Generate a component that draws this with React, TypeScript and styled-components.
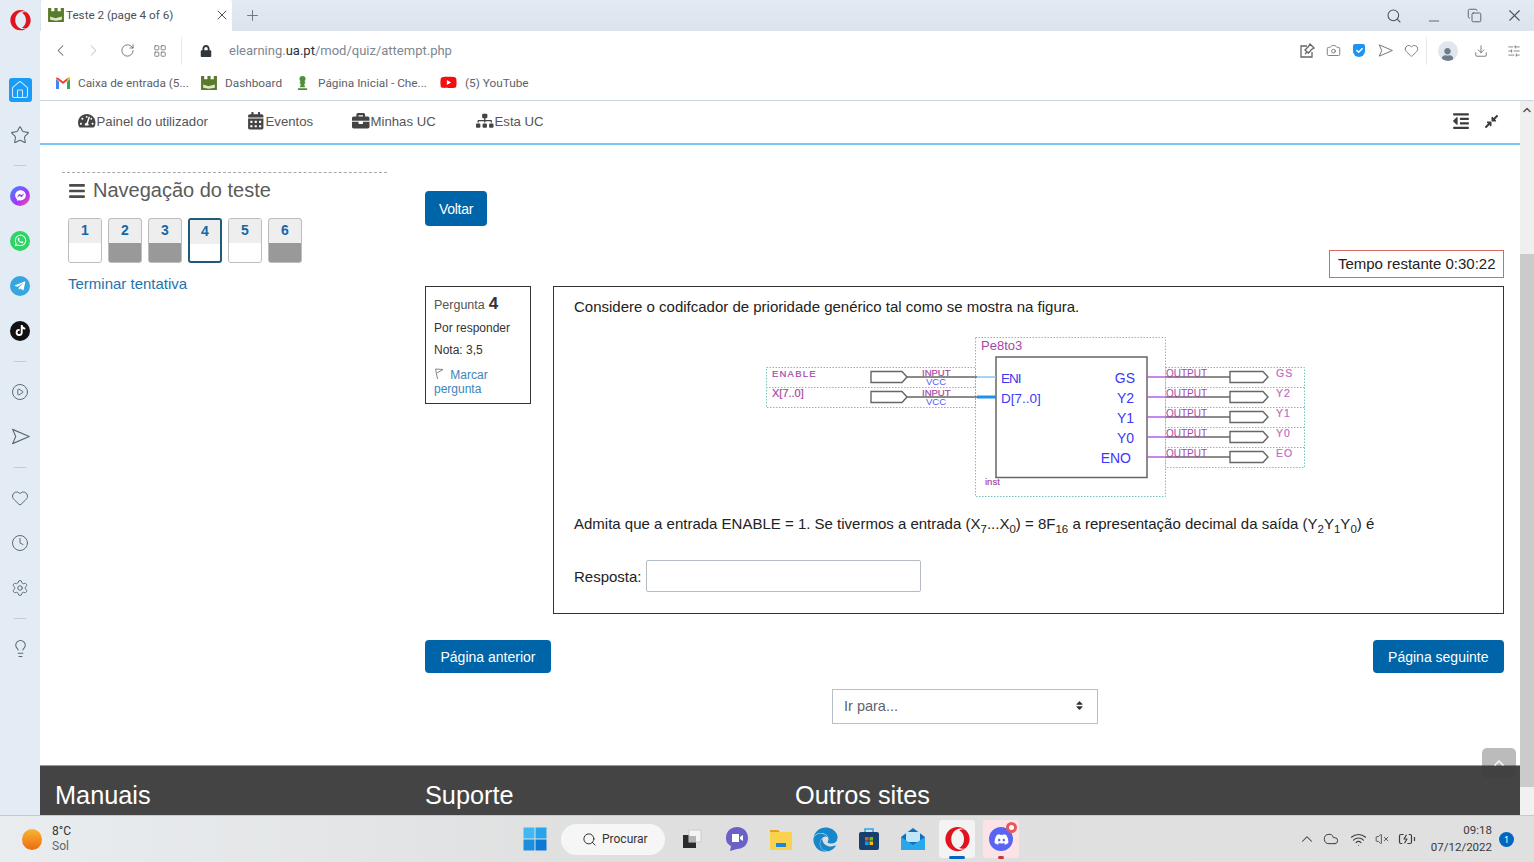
import React from 'react';
import styled, { createGlobalStyle } from 'styled-components';
import { ChevronLeft, ChevronRight, RotateCw, LayoutGrid, Plus, X, Search, Minus, Copy, Download, SlidersHorizontal, Camera, Home, Star, CirclePlay, Heart, Clock, Settings, Lightbulb, ChevronUp, Wifi, VolumeX, Cloud, BatteryCharging } from 'lucide-react';
import { FaOpera, FaFacebookMessenger, FaWhatsapp, FaTelegramPlane, FaTiktok, FaChessPawn, FaYoutube, FaTachometerAlt, FaCalendarAlt, FaBriefcase, FaSitemap, FaBars, FaOutdent, FaCompressAlt, FaEdge, FaDiscord, FaUser, FaCheck, FaSort, FaLock } from 'react-icons/fa';

const GlobalStyle = createGlobalStyle`
    html, body { margin: 0; padding: 0; height: 862px; overflow: hidden; background: #e4ecf5; }
    * { box-sizing: border-box; }
`;

const Screen = styled.div`
    width: 1534px;
    height: 862px;
    display: flex;
    flex-direction: column;
    font-family: 'Liberation Sans', Arial, sans-serif;
`;
const Upper = styled.div`
    flex: 1;
    display: flex;
    min-height: 0;
`;

/* opera side rail */
const Rail = styled.div`
    width: 40px;
    flex: none;
    background: #e3ecf5;
    display: flex;
    flex-direction: column;
    align-items: center;
    color: #5c6670;
`;
const RailLogo = styled.div`
    height: 40px;
    margin-bottom: 27px;
    display: flex;
    align-items: center;
    justify-content: center;
    color: #e0141e;
    font-size: 21px;
`;
const RailSlot = styled.div`
    height: 45px;
    width: 40px;
    display: flex;
    align-items: center;
    justify-content: center;
`;
const RailHome = styled.div`
    width: 23px;
    height: 24px;
    border-radius: 3px;
    background: #1a9bf5;
    color: #cfeaff;
    display: flex;
    align-items: center;
    justify-content: center;
`;
const RailSep = styled.div`
    height: 16px;
    display: flex;
    align-items: center;
    &::before { content: ''; display: block; width: 12px; height: 1px; background: #c3ccd6; }
`;
const SocialDot = styled.div<{ $bg: string; $size?: number }>`
    width: ${p => p.$size ?? 20}px;
    height: ${p => p.$size ?? 20}px;
    border-radius: 50%;
    background: ${p => p.$bg};
    color: #fff;
    font-size: 11px;
    display: flex;
    align-items: center;
    justify-content: center;
`;

/* browser chrome */
const Browser = styled.div`
    flex: 1;
    min-width: 0;
    display: flex;
    flex-direction: column;
`;
const TabStrip = styled.div`
    height: 31px;
    flex: none;
    display: flex;
    align-items: center;
    background: linear-gradient(#e3eaf3, #dbe3ec);
    color: #555;
    font-family: Roboto, sans-serif;
`;
const Tab = styled.div`
    width: 191px;
    height: 31px;
    margin-left: 1px;
    padding: 0 2px 1px 6px;
    background: #fff;
    border-radius: 2px 2px 0 0;
    display: flex;
    align-items: center;
    font-size: 11.7px;
    color: #4a4f55;
`;
const TabTitle = styled.span`
    flex: 1;
    margin-left: 1px;
`;
const NewTab = styled.div`
    margin-left: 12px;
    display: flex;
    color: #6a7076;
`;
const WindowButtons = styled.div`
    margin-left: auto;
    display: flex;
    align-items: center;
    color: #555;
`;
const WindowButton = styled.div`
    width: 40px;
    display: flex;
    justify-content: center;
`;
const AddressBar = styled.div`
    height: 36px;
    flex: none;
    padding-top: 3px;
    background: #fff;
    display: flex;
    align-items: center;
    color: #666;
`;
const AddressButton = styled.div<{ $w?: number; $faded?: boolean }>`
    width: ${p => p.$w ?? 33}px;
    display: flex;
    justify-content: center;
    color: ${p => (p.$faded ? '#c4c9ce' : '#666')};
`;
const BarSep = styled.div<{ $left: number }>`
    width: 1px;
    height: 28px;
    margin-left: ${p => p.$left}px;
    background: #e8ebee;
`;
const UrlText = styled.div`
    font-family: Roboto, sans-serif;
    font-size: 13px;
    color: #7d8791;
    b { font-weight: 400; color: #2c3036; }
`;
const ToolGroup = styled.div`
    margin-left: auto;
    display: flex;
    align-items: center;
`;
const ShieldMark = styled.div`
    width: 12px;
    height: 13px;
    background: #1d93f3;
    border-radius: 2px 2px 6px 6px;
    color: #fff;
    font-size: 7px;
    display: flex;
    align-items: center;
    justify-content: center;
`;
const Avatar = styled.div`
    width: 20px;
    height: 20px;
    border-radius: 50%;
    background: #dfe6ee;
    color: #6f7c8a;
    font-size: 13px;
    overflow: hidden;
    display: flex;
    align-items: flex-end;
    justify-content: center;
`;
const Bookmarks = styled.div`
    height: 34px;
    flex: none;
    background: #fff;
    border-bottom: 1px solid #c9d5e0;
    padding: 0 0 2px 15px;
    display: flex;
    align-items: center;
    font-family: Roboto, sans-serif;
    font-size: 11.8px;
    color: #5c6168;
`;
const Bookmark = styled.div<{ $w: number; $gap: number }>`
    width: ${p => p.$w}px;
    display: flex;
    align-items: center;
    gap: ${p => p.$gap}px;
`;

/* page */
const PageRow = styled.div`
    flex: 1;
    min-height: 0;
    display: flex;
    position: relative;
    background: #fff;
`;
const Page = styled.div`
    flex: 1;
    min-width: 0;
    display: flex;
    flex-direction: column;
    overflow: hidden;
`;
const TopNav = styled.div`
    height: 44px;
    flex: none;
    padding: 0 21px 2px 38px;
    border-bottom: 2px solid #7cc8f4;
    display: flex;
    align-items: center;
    color: #555;
`;
const NavItem = styled.div<{ $w: number }>`
    width: ${p => p.$w}px;
    display: flex;
    align-items: center;
    gap: 1px;
    font-size: 13.2px;
    svg { font-size: 17.5px; color: #444; }
`;
const NavTools = styled.div`
    margin-left: auto;
    display: flex;
    align-items: center;
    gap: 14px;
    color: #3c3c3c;
`;
const Columns = styled.div`
    display: grid;
    grid-template-columns: 325px 1079px;
    column-gap: 38px;
    padding: 0 16px 0 22px;
`;
const Block = styled.div`
    margin-top: 27px;
    border-top: 1px dashed #a8a8a8;
    color: #555;
`;
const BlockTitle = styled.div`
    display: flex;
    align-items: center;
    gap: 7px;
    height: 35px;
    margin: 0 0 10px 6px;
    font-size: 20px;
    color: #5b5b5b;
    svg { font-size: 18px; color: #4c4c4c; }
`;
const QuizNav = styled.div`
    display: flex;
    gap: 6px;
    margin-left: 6px;
`;
const QnButton = styled.div<{ $answered?: boolean; $current?: boolean }>`
    width: 34px;
    height: 45px;
    border: ${p => (p.$current ? '2px solid #1f5a78' : '1px solid #bdbdbd')};
    border-radius: 3px;
    overflow: hidden;
    background: ${p => (p.$answered ? '#999' : '#fff')};
    display: flex;
    flex-direction: column;
`;
const QnNumber = styled.div`
    height: 24px;
    background: #eee;
    color: #1467a8;
    font-size: 14px;
    font-weight: 700;
    text-align: center;
    line-height: 22px;
`;
const FinishLink = styled.div`
    margin: 12px 0 0 6px;
    font-size: 15px;
    line-height: 18px;
    color: #1e72ae;
`;
const MainColumn = styled.div`
    display: flex;
    flex-direction: column;
    align-items: flex-start;
`;
const PrimaryButton = styled.div<{ $top?: number; $tight?: boolean }>`
    height: ${p => (p.$tight ? 35 : 33)}px;
    margin-top: ${p => p.$top ?? 0}px;
    padding: ${p => (p.$tight ? '0 14px' : '0 15.5px')};
    border-radius: 4px;
    background: #0064a8;
    color: #fff;
    font-size: 14px;
    letter-spacing: ${p => (p.$tight ? '-0.3px' : '0')};
    display: flex;
    align-items: center;
`;
const Timer = styled.div`
    align-self: flex-end;
    height: 28px;
    margin-top: 24px;
    padding: 0 7.5px 2px;
    border: 1px solid #d9695f;
    color: #222;
    font-size: 15px;
    display: flex;
    align-items: center;
`;
const QuestionRow = styled.div`
    width: 100%;
    margin-top: 8px;
    display: flex;
    align-items: flex-start;
    gap: 22px;
`;
const InfoBox = styled.div`
    width: 106px;
    height: 118px;
    flex: none;
    padding: 7px 8px;
    border: 1px solid #333;
    font-size: 12px;
    color: #333;
`;
const InfoTitle = styled.div`
    height: 19px;
    display: flex;
    align-items: baseline;
    gap: 4px;
    font-size: 12.5px;
    color: #555;
    b { font-size: 17px; color: #333; }
`;
const InfoLine = styled.div`
    margin-top: 8px;
    line-height: 14px;
`;
const FlagLink = styled.div`
    margin-top: 11px;
    line-height: 14px;
    color: #3b84bd;
    svg { vertical-align: top; margin-right: 3px; }
`;
const QuestionBox = styled.div`
    flex: 1;
    height: 328px;
    padding: 9px 20px;
    border: 1px solid #333;
    color: #222;
    font-size: 15px;
`;
const Para = styled.div<{ $top?: number }>`
    margin-top: ${p => p.$top ?? 0}px;
    line-height: 22px;
    sub { font-size: 11.5px; line-height: 0; }
`;
const Figure = styled.svg`
    display: block;
    width: 550px;
    height: 170px;
    margin: 12px 0 0 186px;
`;
const AnswerRow = styled.div`
    margin-top: 25px;
    display: flex;
    align-items: center;
    gap: 4px;
`;
const AnswerInput = styled.div`
    width: 275px;
    height: 32px;
    border: 1px solid #b5bcc4;
    border-radius: 2px;
`;
const PagerRow = styled.div`
    width: 100%;
    margin-top: 26px;
    display: flex;
    justify-content: space-between;
`;
const JumpSelect = styled.div`
    width: 266px;
    height: 35px;
    margin: 16px 0 0 407px;
    padding: 0 12px 2px 11px;
    border: 1px solid #b9bec4;
    color: #5c6670;
    font-size: 14.5px;
    display: flex;
    align-items: center;
    justify-content: space-between;
    svg { font-size: 11px; color: #333; }
`;
const Footer = styled.div`
    margin-top: 41px;
    height: 60px;
    flex: none;
    padding: 15px 0 0 15px;
    border-top: 1px solid #9a9a9a;
    background: #444;
    color: #fff;
    font-size: 25.3px;
    display: grid;
    grid-template-columns: 370px 370px 370px;
`;
const ScrollColumn = styled.div`
    width: 14px;
    flex: none;
    display: flex;
    flex-direction: column;
    background: #f1f1f1;
`;
const ScrollArrow = styled.div`
    height: 153px;
    background: #efefef;
    color: #555;
    display: flex;
    justify-content: center;
`;
const ScrollThumb = styled.div`
    height: 533px;
    background: #cbcbcb;
`;
const BackToTop = styled.div`
    position: absolute;
    right: 18px;
    top: 647px;
    width: 34px;
    height: 30px;
    border-radius: 5px;
    background: rgba(60, 60, 60, 0.35);
    color: #fff;
    display: flex;
    align-items: center;
    justify-content: center;
`;

/* windows taskbar */
const Taskbar = styled.div`
    height: 47px;
    flex: none;
    border-top: 1px solid #c9c9c9;
    background: linear-gradient(90deg, #e9edf0, #dfdfdf 40%, #e0e0e0);
    display: flex;
    align-items: center;
    font-family: 'Noto Sans', sans-serif;
    color: #333;
`;
const Weather = styled.div`
    width: 513px;
    flex: none;
    padding-left: 22px;
    display: flex;
    align-items: center;
    gap: 10px;
    font-family: Roboto, sans-serif;
    font-size: 12px;
    line-height: 15px;
    span { display: block; color: #666; }
`;
const Sun = styled.div`
    width: 20px;
    height: 21px;
    border-radius: 50%;
    background: linear-gradient(#f7b733, #ee6a10);
`;
const TaskSlot = styled.div<{ $tile?: string; $w?: number }>`
    width: ${p => p.$w ?? 44}px;
    height: 46px;
    flex: none;
    display: flex;
    align-items: center;
    justify-content: center;
    position: relative;
    ${p => p.$tile && `&::before { content: ''; position: absolute; left: 4px; right: 4px; top: 4px; bottom: 4px; border-radius: 3px; background: ${p.$tile}; }`}
    > * { position: relative; }
`;
const RunDot = styled.div<{ $color: string; $w: number }>`
    position: absolute !important;
    bottom: 3px;
    left: 50%;
    margin-left: ${p => -p.$w / 2}px;
    width: ${p => p.$w}px;
    height: 3px;
    border-radius: 2px;
    background: ${p => p.$color};
`;
const AppBadge = styled.div`
    position: absolute !important;
    top: 6px;
    right: 6px;
    width: 11px;
    height: 11px;
    border-radius: 50%;
    border: 3px solid #e8575c;
    background: #fff;
`;
const SearchPill = styled.div`
    width: 104px;
    height: 31px;
    margin: 0 4px;
    flex: none;
    padding-left: 21px;
    border-radius: 16px;
    background: #f6f6f6;
    display: flex;
    align-items: center;
    gap: 5px;
    font-family: Roboto, sans-serif;
    font-size: 12px;
`;
const Tray = styled.div`
    margin-left: auto;
    padding-right: 20px;
    display: flex;
    align-items: center;
    color: #3d3d3d;
`;
const TrayIcon = styled.div<{ $w: number }>`
    width: ${p => p.$w}px;
    display: flex;
    justify-content: center;
`;
const TrayClock = styled.div`
    margin-left: 6px;
    text-align: right;
    font-family: Roboto, sans-serif;
    font-size: 11.5px;
    line-height: 17px;
    color: #3a3a3a;
`;
const NoticeBadge = styled.div`
    width: 15px;
    height: 15px;
    margin-left: 7px;
    border-radius: 50%;
    background: #0067c0;
    color: #fff;
    font-size: 9px;
    display: flex;
    align-items: center;
    justify-content: center;
`;

const Moodle = () => (
    <svg width="18" height="16" viewBox="0 0 17 15">
        <path d="M1 1 L4 1 L4 4 L7 4 L7 1 L10 1 L10 4 L13 4 L13 1 L16 1 L16 14 L1 14 Z" fill="#5a7a2c" />
        <path d="M3 9 L8 10.5 L14 9 L14 12 L8.5 13 L3 12 Z" fill="#dfe8c8" />
    </svg>
);
const Gmail = () => (
    <svg width="16" height="12" viewBox="0 0 16 12">
        <path d="M1 12 V2 L4 4.5 V12 Z" fill="#4285f4" />
        <path d="M15 12 V2 L12 4.5 V12 Z" fill="#34a853" />
        <path d="M1 1.5 L8 7 L15 1.5 V0.5 L12.5 1 L8 4.5 L3.5 1 L1 0.5 Z" fill="#ea4335" />
        <path d="M12 4.5 L15 2 V0.5 L12.5 1 Z" fill="#fbbc04" />
    </svg>
);
const SendShape = ({ size, stroke }: { size: number; stroke: number }) => (
    <svg width={size} height={size} viewBox="0 0 24 24" fill="none" stroke="currentColor" strokeWidth={stroke} strokeLinejoin="round">
        <path d="M2 3 L23 12 L2 21 L6 12 Z" />
    </svg>
);
const SnapEdit = () => (
    <svg width="16" height="16" viewBox="0 0 16 16" fill="none" stroke="#666" strokeWidth="1.3">
        <path d="M8 3 H2 V14 H13 V9" />
        <path d="M11 1 L15 5 L12.5 6.5 L9.5 10 L6 7 L9.5 3.5 Z M6 11 L8 9" />
    </svg>
);
const Flag = () => (
    <svg width="10" height="12" viewBox="0 0 10 12" fill="none" stroke="#888" strokeWidth="1">
        <path d="M1.5 1 L3.5 11 M1.5 1 L9 1.5 L3 5" />
    </svg>
);
const WinLogo = () => (
    <svg width="24" height="24" viewBox="0 0 24 24">
        <rect x="0.5" y="0.5" width="11" height="11" fill="#42b8f2" />
        <rect x="12.5" y="0.5" width="11" height="11" fill="#28a4ec" />
        <rect x="0.5" y="12.5" width="11" height="11" fill="#1a8fe0" />
        <rect x="12.5" y="12.5" width="11" height="11" fill="#0f78d4" />
    </svg>
);
const TaskView = () => (
    <svg width="20" height="20" viewBox="0 0 20 20">
        <rect x="1" y="6" width="13" height="13" fill="#2b2b2b" />
        <rect x="7" y="1" width="12" height="12" fill="#f4f4f4" stroke="#ccc" />
        <rect x="7" y="7" width="7" height="6" fill="#b5b5b5" />
    </svg>
);
const ChatApp = () => (
    <svg width="24" height="26" viewBox="0 0 24 26">
        <path d="M12 1 C19 1 23 6 23 12 C23 19 18 23 12 23 L5 25 L6 20 C2 18 1 15 1 12 C1 6 5 1 12 1 Z" fill="#6a61c8" />
        <path d="M7 8 H14 V16 H7 Z M15 11 L18 9 V15 L15 13 Z" fill="#fff" />
    </svg>
);
const Folder = () => (
    <svg width="24" height="24" viewBox="0 0 24 24">
        <path d="M1 3 H9 L11 5 H1 Z" fill="#e5a30f" />
        <rect x="1" y="5" width="22" height="18" fill="#fbd24e" />
        <rect x="7" y="16" width="10" height="4" fill="#1c87d6" />
    </svg>
);
const StoreBag = () => (
    <svg width="22" height="24" viewBox="0 0 22 24">
        <path d="M7 5 V2 H15 V5" fill="none" stroke="#28a8ea" strokeWidth="1.5" />
        <rect x="1" y="5" width="20" height="18" rx="2" fill="#17406f" />
        <rect x="7" y="10" width="3.5" height="3.5" fill="#f25022" />
        <rect x="11.5" y="10" width="3.5" height="3.5" fill="#7fba00" />
        <rect x="7" y="14.5" width="3.5" height="3.5" fill="#00a4ef" />
        <rect x="11.5" y="14.5" width="3.5" height="3.5" fill="#ffb900" />
    </svg>
);
const MailApp = () => (
    <svg width="26" height="24" viewBox="0 0 26 24">
        <path d="M13 1 L25 10 V23 H1 V10 Z" fill="#0f6fc0" />
        <path d="M6 5 H20 V15 H6 Z" fill="#bfe6fb" />
        <path d="M1 10 L13 18 L25 10 V23 H1 Z" fill="#28a8ea" />
    </svg>
);

const Pin = ({ x, y, out }: { x: number; y: number; out?: boolean }) => (
    <g fill="none" stroke="#666" strokeWidth="1.4">
        <path d={`M${x} ${y - 5.5} H${x + (out ? 33 : 31)} L${x + (out ? 38 : 36)} ${y} L${x + (out ? 33 : 31)} ${y + 5.5} H${x} Z`} />
    </g>
);

const outputs = [
    { y: 377, name: 'GS', pin: 'GS', end: 1135 },
    { y: 397, name: 'Y2', pin: 'Y2', end: 1134 },
    { y: 417, name: 'Y1', pin: 'Y1', end: 1134 },
    { y: 437, name: 'Y0', pin: 'Y0', end: 1134 },
    { y: 457, name: 'EO', pin: 'ENO', end: 1131 },
];

const Schematic = () => (
    <Figure viewBox="760 330 550 170" fontFamily="'Liberation Sans', Arial, sans-serif">
        <g fill="none" stroke="#78c4bc" strokeWidth="1" strokeDasharray="1.5 1.5">
            <rect x="975.5" y="337.5" width="190" height="159" />
            <rect x="766.5" y="367.5" width="209" height="40" />
            <path d="M766 387.5 H976" />
            <rect x="1165.5" y="367.5" width="139" height="100" />
            <path d="M1165 387.5 H1305 M1165 407.5 H1305 M1165 427.5 H1305 M1165 447.5 H1305" />
        </g>
        <rect x="996" y="357" width="151" height="120.5" fill="#fff" stroke="#666" strokeWidth="1.5" />
        <path d="M907 377 H977 M907 397 H977" stroke="#666" strokeWidth="1.4" />
        <path d="M977 377 H996" stroke="#7fc0f4" strokeWidth="1.4" />
        <path d="M977 397 H996" stroke="#1e90f0" strokeWidth="3" />
        <Pin x={871} y={377} />
        <Pin x={871} y={397} />
        <g fill="#a746a7" stroke="#a746a7" strokeWidth="0.2" fontSize="9.5">
            <text x="772" y="376.5" letterSpacing="1.2">ENABLE</text>
            <text x="772" y="397" fontSize="11">X[7..0]</text>
            <text x="922" y="376">INPUT</text>
            <text x="922" y="396">INPUT</text>
            <text x="985" y="485">inst</text>
        </g>
        <g fill="#5a5af5" fontSize="9.5">
            <text x="926" y="385">VCC</text>
            <text x="926" y="405">VCC</text>
        </g>
        <text x="981" y="350" fill="#a746a7" fontSize="13">Pe8to3</text>
        <g fill="#3a3af5" fontSize="13.5">
            <text x="1001" y="383" letterSpacing="-1">ENI</text>
            <text x="1001" y="403">D[7..0]</text>
        </g>
        {outputs.map(o => (
            <g key={o.name}>
                <path d={`M1147 ${o.y} H1166`} stroke="#a855e8" strokeWidth="1.4" />
                <path d={`M1166 ${o.y} H1230`} stroke="#666" strokeWidth="1.4" />
                <Pin x={1230} y={o.y} out />
                <text x={o.end} y={o.y + 6} textAnchor="end" fill="#3a3af5" fontSize="14">{o.pin}</text>
                <text x="1166" y={o.y - 0.5} fill="#a746a7" fontSize="10">OUTPUT</text>
                <text x="1276" y={o.y} fill="#c46ac4" stroke="#c46ac4" strokeWidth="0.2" fontSize="10.5" letterSpacing="1">{o.name}</text>
            </g>
        ))}
    </Figure>
);

const SideRail = () => (
    <Rail>
        <RailLogo><FaOpera /></RailLogo>
        <RailSlot><RailHome><Home size={20} strokeWidth={1.3} /></RailHome></RailSlot>
        <RailSlot><Star size={20} strokeWidth={1.3} /></RailSlot>
        <RailSep />
        <RailSlot><SocialDot $bg="linear-gradient(135deg, #3b8bff, #a334fa 60%, #ff5c87)"><FaFacebookMessenger /></SocialDot></RailSlot>
        <RailSlot><SocialDot $bg="#2fd366"><FaWhatsapp size={13} /></SocialDot></RailSlot>
        <RailSlot><SocialDot $bg="#37a6e0"><FaTelegramPlane size={12} /></SocialDot></RailSlot>
        <RailSlot><SocialDot $bg="#111"><FaTiktok /></SocialDot></RailSlot>
        <RailSep />
        <RailSlot><CirclePlay size={18} strokeWidth={1.3} /></RailSlot>
        <RailSlot><SendShape size={19} stroke={1.4} /></RailSlot>
        <RailSep />
        <RailSlot><Heart size={18} strokeWidth={1.3} /></RailSlot>
        <RailSlot><Clock size={18} strokeWidth={1.3} /></RailSlot>
        <RailSlot><Settings size={18} strokeWidth={1.3} /></RailSlot>
        <RailSep />
        <RailSlot><Lightbulb size={19} strokeWidth={1.3} /></RailSlot>
    </Rail>
);

const BrowserChrome = () => (
    <>
        <TabStrip>
            <Tab>
                <Moodle />
                <TabTitle>Teste 2 (page 4 of 6)</TabTitle>
                <X size={16} strokeWidth={1.5} />
            </Tab>
            <NewTab><Plus size={17} strokeWidth={1.3} /></NewTab>
            <WindowButtons>
                <WindowButton><Search size={16} strokeWidth={1.6} /></WindowButton>
                <WindowButton><Minus size={16} strokeWidth={1.3} style={{ marginTop: 10 }} /></WindowButton>
                <WindowButton><Copy size={15} strokeWidth={1.4} /></WindowButton>
                <WindowButton><X size={19} strokeWidth={1.4} /></WindowButton>
            </WindowButtons>
        </TabStrip>
        <AddressBar>
            <AddressButton $w={40}><ChevronLeft size={19} strokeWidth={1.3} /></AddressButton>
            <AddressButton $w={26} $faded><ChevronRight size={19} strokeWidth={1.3} /></AddressButton>
            <AddressButton $w={42}><RotateCw size={15} strokeWidth={1.4} /></AddressButton>
            <AddressButton $w={24}><LayoutGrid size={14} strokeWidth={1.3} /></AddressButton>
            <BarSep $left={9} />
            <AddressButton $w={47}><FaLock size={12} color="#30363c" /></AddressButton>
            <UrlText>elearning.<b>ua.pt</b>/mod/quiz/attempt.php</UrlText>
            <ToolGroup>
                <AddressButton $w={26}><SnapEdit /></AddressButton>
                <AddressButton $w={26}><Camera size={15} strokeWidth={1.3} /></AddressButton>
                <AddressButton $w={26}><ShieldMark><FaCheck /></ShieldMark></AddressButton>
                <AddressButton $w={26}><SendShape size={15} stroke={1.4} /></AddressButton>
                <AddressButton $w={26}><Heart size={15} strokeWidth={1.3} /></AddressButton>
                <BarSep $left={2} />
                <AddressButton $w={41}><Avatar><FaUser /></Avatar></AddressButton>
                <AddressButton $w={25}><Download size={14} strokeWidth={1.4} /></AddressButton>
                <AddressButton $w={41}><SlidersHorizontal size={14} strokeWidth={1.3} /></AddressButton>
            </ToolGroup>
        </AddressBar>
        <Bookmarks>
            <Bookmark $w={145} $gap={7}><Gmail />Caixa de entrada (5...</Bookmark>
            <Bookmark $w={95} $gap={7}><Moodle />Dashboard</Bookmark>
            <Bookmark $w={145} $gap={8}><FaChessPawn color="#4f8f3a" size={15} />Página Inicial - Che...</Bookmark>
            <Bookmark $w={100} $gap={8}><FaYoutube color="#f01010" size={17} />(5) YouTube</Bookmark>
        </Bookmarks>
    </>
);

const Navigation = () => (
    <TopNav>
        <NavItem $w={169}><FaTachometerAlt />Painel do utilizador</NavItem>
        <NavItem $w={105}><FaCalendarAlt />Eventos</NavItem>
        <NavItem $w={124}><FaBriefcase />Minhas UC</NavItem>
        <NavItem $w={80}><FaSitemap />Esta UC</NavItem>
        <NavTools><FaOutdent size={18} /><FaCompressAlt size={15} /></NavTools>
    </TopNav>
);

const pagesDone = [false, true, true, false, false, true];

const QuizBlock = () => (
    <Block>
        <BlockTitle><FaBars />Navegação do teste</BlockTitle>
        <QuizNav>
            {pagesDone.map((done, i) => (
                <QnButton key={i} $answered={done} $current={i === 3}>
                    <QnNumber>{i + 1}</QnNumber>
                </QnButton>
            ))}
        </QuizNav>
        <FinishLink>Terminar tentativa</FinishLink>
    </Block>
);

const Question = () => (
    <QuestionRow>
        <InfoBox>
            <InfoTitle>Pergunta <b>4</b></InfoTitle>
            <InfoLine>Por responder</InfoLine>
            <InfoLine>Nota: 3,5</InfoLine>
            <FlagLink><Flag /> Marcar pergunta</FlagLink>
        </InfoBox>
        <QuestionBox>
            <Para>Considere o codifcador de prioridade genérico tal como se mostra na figura.</Para>
            <Schematic />
            <Para $top={13}>
                Admita que a entrada ENABLE = 1. Se tivermos a entrada (X<sub>7</sub>...X<sub>0</sub>) = 8F<sub>16</sub> a representação decimal da saída (Y<sub>2</sub>Y<sub>1</sub>Y<sub>0</sub>) é
            </Para>
            <AnswerRow>Resposta: <AnswerInput /></AnswerRow>
        </QuestionBox>
    </QuestionRow>
);

const SystemTray = () => (
    <Tray>
        <TrayIcon $w={24}><ChevronUp size={18} strokeWidth={1.4} /></TrayIcon>
        <TrayIcon $w={24}><Cloud size={16} strokeWidth={1.5} /></TrayIcon>
        <TrayIcon $w={32}><Wifi size={17} strokeWidth={1.5} /></TrayIcon>
        <TrayIcon $w={14}><VolumeX size={16} strokeWidth={1.4} /></TrayIcon>
        <TrayIcon $w={36}><BatteryCharging size={18} strokeWidth={1.6} /></TrayIcon>
        <TrayClock>09:18<br />07/12/2022</TrayClock>
        <NoticeBadge>1</NoticeBadge>
    </Tray>
);

export default function App() {
    return (
        <Screen>
            <GlobalStyle />
            <Upper>
                <SideRail />
                <Browser>
                    <BrowserChrome />
                    <PageRow>
                        <Page>
                            <Navigation />
                            <Columns>
                                <QuizBlock />
                                <MainColumn>
                                    <PrimaryButton $top={46} $tight>Voltar</PrimaryButton>
                                    <Timer>Tempo restante 0:30:22</Timer>
                                    <Question />
                                    <PagerRow>
                                        <PrimaryButton>Página anterior</PrimaryButton>
                                        <PrimaryButton>Página seguinte</PrimaryButton>
                                    </PagerRow>
                                    <JumpSelect>Ir para...<FaSort /></JumpSelect>
                                </MainColumn>
                            </Columns>
                            <Footer>
                                <div>Manuais</div>
                                <div>Suporte</div>
                                <div>Outros sites</div>
                            </Footer>
                        </Page>
                        <ScrollColumn>
                            <ScrollArrow><ChevronUp size={12} strokeWidth={3} style={{ marginTop: 3 }} /></ScrollArrow>
                            <ScrollThumb />
                        </ScrollColumn>
                        <BackToTop><ChevronUp size={16} strokeWidth={2} /></BackToTop>
                    </PageRow>
                </Browser>
            </Upper>
            <Taskbar>
                <Weather>
                    <Sun />
                    <div>8°C<span>Sol</span></div>
                </Weather>
                <TaskSlot><WinLogo /></TaskSlot>
                <SearchPill><Search size={15} strokeWidth={1.6} />Procurar</SearchPill>
                <TaskSlot $w={46}><TaskView /></TaskSlot>
                <TaskSlot><ChatApp /></TaskSlot>
                <TaskSlot><Folder /></TaskSlot>
                <TaskSlot><FaEdge size={25} color="#1687c9" /></TaskSlot>
                <TaskSlot><StoreBag /></TaskSlot>
                <TaskSlot><MailApp /></TaskSlot>
                <TaskSlot $tile="#f3f3f3">
                    <FaOpera size={25} color="#e0141e" />
                    <RunDot $color="#0067c0" $w={16} />
                </TaskSlot>
                <TaskSlot $tile="#fbe3e6">
                    <SocialDot $bg="#5865f2" $size={24}><FaDiscord size={15} /></SocialDot>
                    <AppBadge />
                    <RunDot $color="#d13438" $w={6} />
                </TaskSlot>
                <SystemTray />
            </Taskbar>
        </Screen>
    );
}
